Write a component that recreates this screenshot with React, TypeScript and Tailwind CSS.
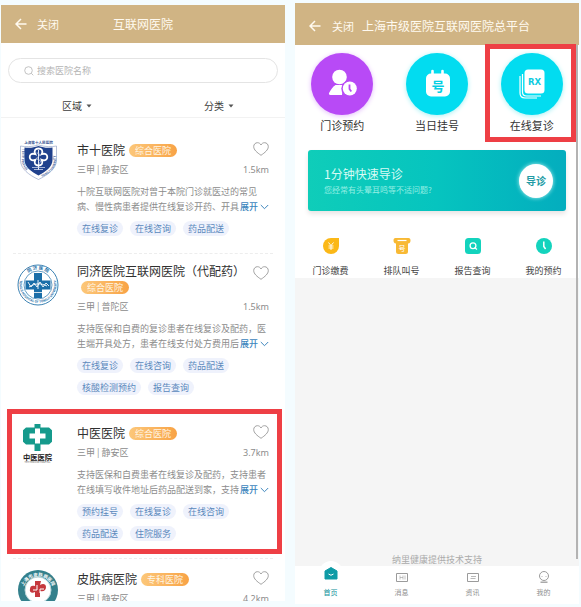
import React from "react";

type Hospital = {
  name: string;
  kind: string;
  stacked?: boolean;
  marked?: boolean;
  area: string;
  distance: string;
  lines?: [string, string];
  tags?: string[];
  logo: React.ReactNode;
};

function BackArrow() {
  return (
    <svg viewBox="0 0 12 12" className="h-3 w-3" fill="none" stroke="currentColor" strokeWidth="1.5" aria-hidden="true">
      <path d="M11.5 6H1M6 1 1 6l5 5" />
    </svg>
  );
}

function ShieldLogo() {
  return (
    <svg viewBox="0 0 40 42" className="ml-px h-[42px] w-10" aria-hidden="true">
      <defs>
        <path id="shieldLeft" d="M3.800 9v11c0 8 6 12.500 13 16" />
        <path id="shieldRight" d="M24 37c8-4 14-9 14-17V8" />
      </defs>
      <text x="20.500" y="4" textAnchor="middle" fontSize="3.600" fontWeight="700" fill="#3b5594">上海第十人民医院</text>
      <path d="M2.500 6c5 1 11 1 18-1 7 2 13 2 18 1v14c0 9-9 15-18 19.500C11 35 2.500 29 2.500 20Z" fill="#fff" stroke="#8797bf" strokeWidth=".6" />
      <g fontSize="2.800" fontWeight="700" fill="#3b5594">
        <text><textPath href="#shieldLeft">TENTH PEOPLES</textPath></text>
        <text><textPath href="#shieldRight">TONGJI UNIVERSITY</textPath></text>
      </g>
      <path d="M6.500 7.500c5 .5 9 .3 14-1.500 5 1.800 9 2 14 1.500V20c0 7-7 11.500-14 15.500-7-4-14-8.500-14-15.500Z" fill="#20418d" />
      <path d="M17.300 14.200c-1.800-3.500 .2-5.700 3.200-5.700s5 2.200 3.200 5.700c3.800-1.300 5.600.5 5.600 2.800s-1.800 4.200-5.600 2.800c1.800 3.700-.2 5.700-3.200 5.700s-5-2-3.200-5.700c-3.800 1.400-5.600-.5-5.600-2.800s1.800-4.100 5.600-2.800Z" fill="none" stroke="#fff" strokeWidth="1.800" />
      <path d="M20.500 10v20" stroke="#fff" strokeWidth=".9" />
      <path d="M18.500 13c4 0 4 3 2 3.500s-2 3.500.5 3.500 2 3-.5 3.500M14 27.500h13M16 29.500h9" fill="none" stroke="#c9d3ec" strokeWidth=".8" />
    </svg>
  );
}

function RingLogo() {
  return (
    <svg viewBox="0 0 42 42" className="h-[42px] w-[42px]" aria-hidden="true">
      <defs>
        <path id="ringTop" d="M5.500 21a15.500 15.500 0 0 1 31 0" />
        <path id="ringBottom" d="M2.800 17a18.500 18.500 0 1 0 36.400 0" />
      </defs>
      <circle cx="21" cy="21" r="20" fill="#fff" stroke="#3d83b4" strokeWidth="1" />
      <circle cx="21" cy="21" r="14" fill="none" stroke="#3d83b4" strokeWidth=".8" />
      <text fontSize="4.500" fontWeight="700" fill="#2671a8"><textPath href="#ringTop" startOffset="50%" textAnchor="middle">同 济 医 院</textPath></text>
      <text fontSize="3.200" fontWeight="700" fill="#2671a8"><textPath href="#ringBottom" startOffset="50%" textAnchor="middle">TONGJI HOSPITAL OF TONGJI UNIVERSITY</textPath></text>
      <path d="M17 9h8v7.500h8.500v9H25V34h-8v-8.500H8.500v-9H17Z" fill="#1b6fa9" />
      <path d="M11 18l3 5 3-4 3 4 3-5 3 5 3-4 3 3M12 23c6-4 12-4 18-1M21 16v9" fill="none" stroke="#fff" strokeWidth=".9" />
      <path d="M17 28.500h8" stroke="#fff" strokeWidth=".8" />
    </svg>
  );
}

function CrossLogo() {
  return (
    <svg viewBox="0 0 32 42" className="ml-1 h-[42px] w-8" aria-hidden="true">
      <path d="M13.500 1h6v3.500H28l3 2.800v11.400l-3 2.800h-8.500V28h-6v-6.500H5l-3-2.800V7.300l3-2.800h8.500Z" fill="#159a8c" />
      <path d="M14 5.500h5v5h5.500v5H19v5h-5v-5H8.500v-5H14Z" fill="#fff" />
      <text x="16.500" y="36.500" textAnchor="middle" fontSize="7.300" fontWeight="700" fill="#222">中医医院</text>
      <text x="16.500" y="40" textAnchor="middle" fontSize="2.200" fill="#555">TCM MEDICINE HOSPITAL</text>
    </svg>
  );
}

function TealRingLogo() {
  return (
    <svg viewBox="0 0 42 42" className="h-[42px] w-[42px]" aria-hidden="true">
      <defs>
        <path id="tealTop" d="M5.500 23a15.500 15.500 0 1 1 31 0" />
      </defs>
      <circle cx="21" cy="21" r="20" fill="#33808c" />
      <circle cx="21" cy="21" r="13" fill="#fff" stroke="#b8d6da" />
      <text fontSize="4.600" fontWeight="700" fill="#fff"><textPath href="#tealTop" startOffset="50%" textAnchor="middle">上海市皮肤病医院</textPath></text>
      <path d="M18 12h6l-1 4c3-2 6-1 6 2s-2 5-6 4v6h-5v-5c-3 2-6 0-5-3 0-3 2-4 5-3Z" fill="#c5383d" />
      <path d="M16 21h4v-5m3 8v-4h4" fill="none" stroke="#fff" />
    </svg>
  );
}

const hospitals: Hospital[] = [
  {
    name: "市十医院",
    kind: "综合医院",
    area: "静安区",
    distance: "1.5km",
    lines: ["十院互联网医院对曾于本院门诊就医过的常见", "病、慢性病患者提供在线复诊开药、开具"],
    tags: ["在线复诊", "在线咨询", "药品配送"],
    logo: <ShieldLogo />,
  },
  {
    name: "同济医院互联网医院（代配药）",
    kind: "综合医院",
    stacked: true,
    area: "普陀区",
    distance: "1.5km",
    lines: ["支持医保和自费的复诊患者在线复诊及配药，医", "生端开具处方，患者在线支付处方费用后"],
    tags: ["在线复诊", "在线咨询", "药品配送", "核酸检测预约", "报告查询"],
    logo: <RingLogo />,
  },
  {
    name: "中医医院",
    kind: "综合医院",
    marked: true,
    area: "静安区",
    distance: "3.7km",
    lines: ["支持医保和自费患者在线复诊及配药，支持患者", "在线填写收件地址后药品配送到家，支持"],
    tags: ["预约挂号", "在线复诊", "在线咨询", "药品配送", "住院服务"],
    logo: <CrossLogo />,
  },
  {
    name: "皮肤病医院",
    kind: "专科医院",
    area: "静安区",
    distance: "4.2km",
    logo: <TealRingLogo />,
  },
];

function HospitalCard({ h }: { h: Hospital }) {
  return (
    <li className="relative">
      <article className="mx-3 flex border-b border-dashed border-[#ededed] pr-1 pt-2 pb-[17px]">
        <div className="w-16 shrink-0 pt-[2px] pl-1">{h.logo}</div>
        <div className="min-w-0 flex-1">
          <div className="flex items-start justify-between">
            <div className={h.stacked ? "flex flex-col items-start gap-px pb-[5px]" : "flex items-center py-[3px]"}>
              <h2 className="text-[12px] leading-[18px] whitespace-nowrap text-[#303030]">{h.name}</h2>
              <span className="ml-1 h-[13px] rounded-full bg-linear-to-r from-[#fcc779] to-[#f8a345] px-[6px] text-[9px] leading-[13px] whitespace-nowrap text-[#fff6e5]">
                {h.kind}
              </span>
            </div>
            <button type="button" aria-label="收藏" className="pt-1 text-[#979797]">
              <svg viewBox="0 0 16 14" className="h-[14px] w-4" fill="none" stroke="currentColor" strokeWidth=".9">
                <path d="M8 13.300C4 10.500.7 7.800.7 4.600.7 2.300 2.400.7 4.400.7 6 .7 7.300 1.500 8 3 8.700 1.500 10 .7 11.600.7c2 0 3.700 1.600 3.700 3.900C15.300 7.800 12 10.500 8 13.300Z" />
              </svg>
            </button>
          </div>
          <p className="flex justify-between text-[9px] leading-4 text-[#8c8c8c]">
            <span>三甲 | {h.area}</span>
            <span className="font-['Noto_Sans',sans-serif]">{h.distance}</span>
          </p>
          {h.lines && (
            <div className="mt-[6px] text-[9px] leading-[15px] whitespace-nowrap text-[#8c8c8c]">
              <p>{h.lines[0]}</p>
              <div className="flex justify-between">
                <p>{h.lines[1]}</p>
                <button type="button" className="flex items-center gap-[2px] font-medium text-[#3d86bd]">
                  展开
                  <svg viewBox="0 0 9 6" className="h-[6px] w-[9px]" fill="none" stroke="currentColor" aria-hidden="true">
                    <path d="m.8 1 3.700 3.700L8.200 1" />
                  </svg>
                </button>
              </div>
            </div>
          )}
          {h.tags && (
            <ul className="mt-[7px] flex flex-wrap gap-[7px]">
              {h.tags.map((t) => (
                <li key={t} className="rounded-full bg-[#eff2fc] px-[5px] text-[9px] leading-[15px] text-[#5b89bd]">
                  {t}
                </li>
              ))}
            </ul>
          )}
        </div>
      </article>
      {h.marked && <div className="pointer-events-none absolute -top-1 right-[3px] bottom-[5px] left-[6px] border-[5px] border-[#ee3f45]" />}
    </li>
  );
}

function HospitalList() {
  return (
    <section className="mt-[5px] mb-[6px] min-w-0 flex-1 overflow-hidden bg-white">
      <header className="grid h-[38px] grid-cols-[1fr_auto_1fr] items-center bg-[#d0b484] text-[#fffaf0]">
        <div className="flex items-center gap-[10px] pl-[14px]">
          <button type="button" aria-label="返回"><BackArrow /></button>
          <button type="button" className="text-[11px] leading-4">关闭</button>
        </div>
        <h1 className="text-[12px] leading-4">互联网医院</h1>
      </header>
      <label className="mx-[7px] mt-[15px] flex h-[25px] items-center gap-[3px] rounded-full border border-[#e4e4e4] pl-[15px] text-[#bcbcbc]">
        <svg viewBox="0 0 10 10" className="h-[10px] w-[10px]" fill="none" stroke="currentColor" strokeWidth=".9" aria-hidden="true">
          <circle cx="4.500" cy="4.500" r="3.800" />
          <path d="m7.300 7.300 2 2" />
        </svg>
        <input aria-label="搜索医院名称" placeholder="搜索医院名称" className="min-w-0 flex-1 bg-transparent text-[9px] leading-4 outline-none placeholder:text-[#b5b5b5]" />
      </label>
      <div className="mt-[12px] grid h-[23px] grid-cols-2 border-b border-[#f2f2f2] text-[10px] leading-5 text-[#3c3c3c]">
        {["区域", "分类"].map((t) => (
          <button key={t} type="button" className="flex items-center justify-center gap-1 pl-[10px]">
            {t}
            <svg viewBox="0 0 6 4" className="h-1 w-[6px]" fill="#555" aria-hidden="true"><path d="M.5.500h5L3 3.500Z" /></svg>
          </button>
        ))}
      </div>
      <ul className="pt-3">
        {hospitals.map((h) => (
          <HospitalCard key={h.name} h={h} />
        ))}
      </ul>
    </section>
  );
}

const services = [
  {
    label: "门诊预约",
    disc: "bg-[#b84af6] shadow-[0_1px_5px_#e3bdfb]",
    icon: (
      <svg viewBox="0 0 30 30" className="h-[30px] w-[30px]" aria-hidden="true">
        <circle cx="12.500" cy="8" r="7.300" fill="#fff" />
        <path d="M8.500 16H16l-1 10H3.500c-1.500 0-2-1-1.300-2.200C4 20.500 5.500 18 8.500 16Z" fill="#fff" />
        <circle cx="22.500" cy="19.500" r="8.200" fill="#b84af6" />
        <circle cx="22.800" cy="19.500" r="7" fill="#fff" />
        <path d="M22.500 15.500v4.500l1.800 2.500" fill="none" stroke="#b84af6" strokeWidth="1.800" />
      </svg>
    ),
  },
  {
    label: "当日挂号",
    disc: "bg-[#02dcf0] shadow-[0_1px_5px_#a5f1f4]",
    icon: (
      <svg viewBox="0 0 30 30" className="h-[30px] w-[30px]" aria-hidden="true">
        <path d="M10.500 2v5m10-5v5" stroke="#fff" strokeWidth="2.600" strokeLinecap="round" />
        <rect x="4" y="4.500" width="24" height="23" rx="5" fill="#fff" />
        <text x="16" y="21.500" textAnchor="middle" fontSize="13" fontWeight="700" fill="#02cfe4">号</text>
      </svg>
    ),
  },
  {
    label: "在线复诊",
    disc: "bg-[#02dcf0] shadow-[0_1px_5px_#a5f1f4]",
    marked: true,
    icon: (
      <svg viewBox="0 0 30 30" className="h-[30px] w-[30px]" aria-hidden="true">
        <rect x="7.500" y=".5" width="20" height="24" rx="3.500" fill="#fff" />
        <path d="M5.500 5v18q0 4 4 4H24" fill="none" stroke="#fff" strokeWidth="1.200" />
        <path d="M3 7v17q0 5 5 5h12" fill="none" stroke="#fff" strokeWidth="1.200" />
        <text x="17.500" y="15.500" textAnchor="middle" fontSize="8.500" fontWeight="700" fontFamily="DejaVu Sans, sans-serif" fill="#10cbe0">RX</text>
      </svg>
    ),
  },
];

const shortcuts = [
  {
    label: "门诊缴费",
    icon: (
      <svg viewBox="0 0 18 18" className="h-[18px] w-[18px]" aria-hidden="true">
        <path d="M9 1h8v8a8 8 0 1 1-8-8Z" fill="#fbb817" />
        <path d="m6.500 5.500 2.500 3 2.500-3M6.500 9h5M6.500 11h5M9 8.500V13" fill="none" stroke="#fff" strokeWidth=".9" />
      </svg>
    ),
  },
  {
    label: "排队叫号",
    icon: (
      <svg viewBox="0 0 18 18" className="h-[18px] w-[18px]" aria-hidden="true">
        <path d="M2.500 1h13C17 1 17.500 2 17.500 3.500S17 6.500 15 6.500v8q0 2.500-2.500 2.500h-7Q3 17 3 14.500v-8C1 6.500.5 5 .5 3.500S1 1 2.500 1Z" fill="#f8b934" />
        <path d="M4.500 3.500h9" stroke="#fff" strokeWidth="1.200" />
        <text x="9" y="13.500" textAnchor="middle" fontSize="7" fill="#fff">号</text>
      </svg>
    ),
  },
  {
    label: "报告查询",
    icon: (
      <svg viewBox="0 0 18 18" className="h-[18px] w-[18px]" aria-hidden="true">
        <rect x="1" y="1" width="16" height="16" rx="3.500" fill="#13d3bd" />
        <circle cx="9" cy="8.800" r="2.900" fill="none" stroke="#fff" strokeWidth="1.300" />
        <path d="m10.500 10.500 2.500 2" stroke="#fff" strokeWidth="1.300" />
      </svg>
    ),
  },
  {
    label: "我的预约",
    icon: (
      <svg viewBox="0 0 18 18" className="h-[18px] w-[18px]" aria-hidden="true">
        <circle cx="9" cy="9" r="8" fill="#13d3bd" />
        <path d="M8.800 4.500v5l1.800 2.500" fill="none" stroke="#fff" strokeWidth="1.500" />
      </svg>
    ),
  },
];

const tabs = [
  {
    label: "首页",
    active: true,
    icon: (
      <svg viewBox="0 0 14 14" className="h-[14px] w-[14px]" aria-hidden="true">
        <path d="M7 1.500 13 5v8H1V5Z" fill="#0e9ba6" stroke="#0e9ba6" strokeLinejoin="round" />
        <path d="M4.500 8q2.500 2.500 5 0" fill="none" stroke="#fff" />
      </svg>
    ),
  },
  {
    label: "消息",
    icon: (
      <svg viewBox="0 0 14 14" className="h-[14px] w-[14px]" fill="none" stroke="#9b9b9b" aria-hidden="true">
        <path d="M1.500 3.500h11v8h-11Z" />
        <path d="M5 5.500v4M8 5.500v4M5 7.500h3M10 5.500v4" strokeWidth=".6" />
      </svg>
    ),
  },
  {
    label: "资讯",
    icon: (
      <svg viewBox="0 0 14 14" className="h-[14px] w-[14px]" fill="none" stroke="#9b9b9b" aria-hidden="true">
        <path d="M1.500 3.500h11v8h-11Z" />
        <path d="M5 6.500h5M4.500 8.500h5" strokeWidth=".7" />
      </svg>
    ),
  },
  {
    label: "我的",
    icon: (
      <svg viewBox="0 0 14 14" className="h-[14px] w-[14px]" fill="none" stroke="#9b9b9b" aria-hidden="true">
        <circle cx="7" cy="6" r="4.500" />
        <path d="M5 6v1M9 6v1" strokeWidth=".7" />
        <path d="M3.500 12.200h7" strokeWidth="1.300" />
      </svg>
    ),
  },
];

function Platform() {
  return (
    <section className="relative mt-[3px] mb-[3px] flex min-w-0 flex-1 flex-col overflow-hidden bg-white">
      <header className="flex h-[42px] shrink-0 items-center bg-[#d0b484] pt-[3px] pl-[14px] text-[#fffaf0]">
        <button type="button" aria-label="返回"><BackArrow /></button>
        <button type="button" className="ml-[11px] text-[11px] leading-4">关闭</button>
        <h1 className="ml-2 text-[12px] leading-4 whitespace-nowrap">上海市级医院互联网医院总平台</h1>
      </header>
      <div className="absolute top-[42px] right-[1px] bottom-[45px] w-[2px] bg-[#b3b3b3]" />
      <nav className="grid shrink-0 grid-cols-3">
        {services.map((s) => (
          <button key={s.label} type="button" className="relative flex flex-col items-center pt-2 text-[11px] leading-5 text-[#333]">
            <span className={"flex h-[62px] w-[62px] items-center justify-center rounded-full " + s.disc}>{s.icon}</span>
            {s.label}
            {s.marked && <span className="absolute -top-px right-[3px] left-[1px] h-[98px] border-[5px] border-[#ee3f45]" />}
          </button>
        ))}
      </nav>
      <div className="mx-[13px] mt-[15px] flex h-[61px] shrink-0 items-center justify-between rounded-[3px] bg-linear-to-r from-[#0fcdb9] via-[#06c4bf] to-[#04adbe] pr-[13px] pl-4 shadow-[0_3px_5px_#e9e5e5]">
        <div className="text-[#d9fbf5]">
          <h2 className="text-[12px] leading-[18px]">1分钟快速导诊</h2>
          <p className="text-[8px] leading-[14px] text-[#92eee3]">您经常有头晕耳鸣等不适问题?</p>
        </div>
        <button type="button" className="h-[34px] w-[34px] rounded-full bg-white text-[10px] font-bold text-[#229ba5] shadow-[0_0_4px_#b5f2f2]">
          导诊
        </button>
      </div>
      <nav className="mt-[26px] grid h-[41px] shrink-0 grid-cols-4 overflow-hidden">
        {shortcuts.map((s) => (
          <button key={s.label} type="button" className="flex flex-col items-center gap-[8px] text-[9px] leading-4 text-[#444]">
            {s.icon}
            {s.label}
          </button>
        ))}
      </nav>
      <div className="flex flex-1 items-end justify-center bg-[#f5f5f5]">
        <p className="text-[9px] leading-[13px] text-[#ababab]">纳里健康提供技术支持</p>
      </div>
      <nav className="grid h-[38px] shrink-0 grid-cols-4 bg-white">
        {tabs.map((t) => (
          <button
            key={t.label}
            type="button"
            className={"relative flex flex-col items-center text-[7px] leading-3 " + (t.active ? "pt-0 text-[#0e8f99]" : "pt-1 text-[#8f8f8f]")}
          >
            {t.active && <span className="absolute -top-[5px] h-6 w-6 rounded-full bg-white" />}
            <span className={t.active ? "relative mb-[6px]" : "mb-[2px]"}>{t.icon}</span>
            {t.label}
          </button>
        ))}
      </nav>
    </section>
  );
}

export default function App() {
  return (
    <main lang="zh-CN" className="flex h-screen gap-[10px] overflow-hidden bg-[#f4fcff] pr-[2px] pl-px font-['Noto_Sans_CJK_SC',sans-serif]">
      <HospitalList />
      <Platform />
    </main>
  );
}
